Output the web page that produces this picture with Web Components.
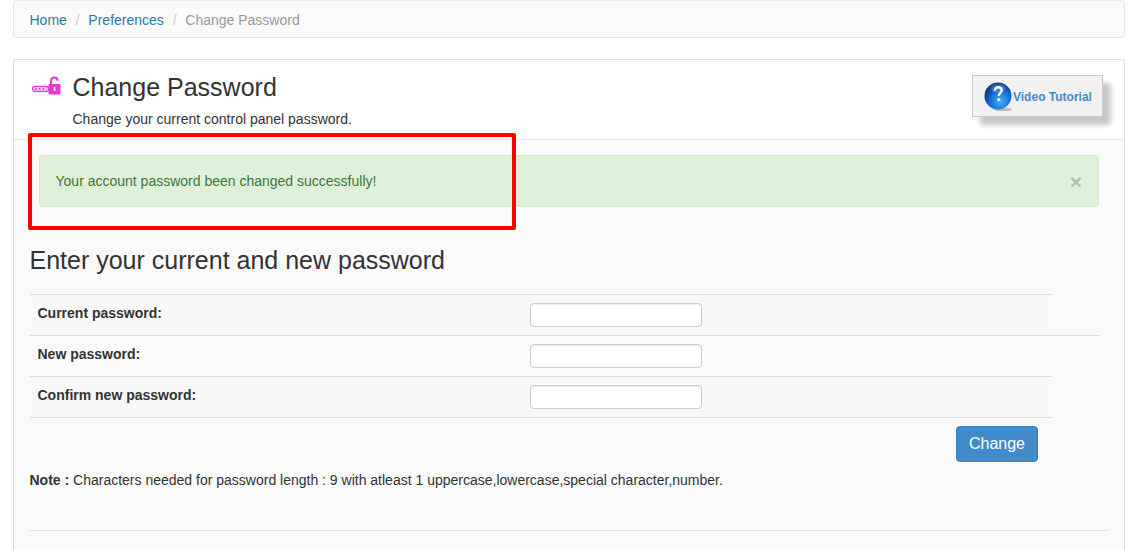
<!DOCTYPE html>
<html>
<head>
<meta charset="utf-8">
<title>Change Password</title>
<style>
    html, body { margin: 0; background: #fff; }
    body { font: 14px/20px "Liberation Sans", Arial, sans-serif; color: #333; height: 550px; overflow: hidden; }
</style>
</head>
<body>
<cp-page>
    <cp-breadcrumb slot="crumbs" items="Home,Preferences" current="Change Password"></cp-breadcrumb>
    <cp-panel slot="panel">
        <cp-header slot="head" heading="Change Password" sub="Change your current control panel password."></cp-header>
        <cp-alert>Your account password been changed successfully!</cp-alert>
        <cp-form></cp-form>
    </cp-panel>
</cp-page>

<script>
class CpPage extends HTMLElement {
    constructor() {
        super();
        this.attachShadow({mode: "open"}).innerHTML = `
        <style>
            :host { display: block; padding: 0 14px 0 13px; position: relative; }
            .gap { height: 21px; }
            .mark { position: absolute; left: 28px; top: 133px; width: 480px; height: 89px; border: 4px solid #f00; border-radius: 2px; }
        </style>
        <slot name="crumbs"></slot>
        <div class="gap"></div>
        <slot name="panel"></slot>
        <div class="mark"></div>
        `;
    }
}

class CpBreadcrumb extends HTMLElement {
    constructor() {
        super();
        this._shadowDOM = this.attachShadow({mode: "open"});
    }

    connectedCallback() {
        const links = this.getAttribute("items").split(",");
        this._shadowDOM.innerHTML = `
        <style>
            :host { display: flex; height: 38px; box-sizing: border-box; align-items: center; padding: 1px 15px 0 15.5px;
                background: #fafafa; border: 1px solid #e5e5e5; border-top-color: #eee; border-radius: 4px; }
            a { color: #2e7ba6; text-decoration: none; }
            i { font-style: normal; color: #ccc; padding: 0 8.8px; }
            span { color: #999; }
        </style>
        ${links.map(l => `<a href="#">${l}</a><i>/</i>`).join("")}<span>${this.getAttribute("current")}</span>
        `;
    }
}

class CpPanel extends HTMLElement {
    constructor() {
        super();
        this.attachShadow({mode: "open"}).innerHTML = `
        <style>
            :host { display: block; border: 1px solid #ddd; border-bottom: 0; border-radius: 4px 4px 0 0; background: #fafafa; height: 491px; box-sizing: border-box; }
            .body { padding: 15px 25px 0 25px; }
        </style>
        <slot name="head"></slot>
        <div class="body"><slot></slot></div>
        `;
    }
}

class CpHeader extends HTMLElement {
    constructor() {
        super();
        this._shadowDOM = this.attachShadow({mode: "open"});
    }

    connectedCallback() {
        this._shadowDOM.innerHTML = `
        <style>
            :host { display: flex; height: 80px; box-sizing: border-box; background: #fff; border-bottom: 1px solid #e5e5e5;
                border-radius: 4px 4px 0 0; padding: 14px 21px 0 17px; }
            svg { flex: none; margin: 2px 10.5px 0 0; }
            .text { flex: 1; }
            h1 { margin: 0; font-size: 25px; font-weight: 400; line-height: 27px; color: #333; }
            p { margin: 8px 0 0; color: #333; }
            cp-video { margin-top: 1px; }
        </style>
        <svg width="31" height="20" viewBox="0 0 31 20">
            <rect x="1.6" y="10.4" width="16" height="5" rx="2.5" fill="#f8d4f3" stroke="#e63bd3" stroke-width="1.3"/>
            <circle cx="5" cy="12.9" r="1" fill="#e63bd3"/>
            <circle cx="8.7" cy="12.9" r="1" fill="#e63bd3"/>
            <circle cx="12.4" cy="12.9" r="1" fill="#e63bd3"/>
            <path d="M20 8V5C20 2.8 21.3 1.5 23.2 1.5S26.6 2.8 26.6 4.8" fill="none" stroke="#e63bd3" stroke-width="2"/>
            <rect x="17.5" y="8" width="12" height="10.5" rx="1.2" fill="#e63bd3"/>
            <rect x="22.8" y="11" width="1.6" height="4" fill="#fff"/>
        </svg>
        <div class="text"><h1>${this.getAttribute("heading")}</h1><p>${this.getAttribute("sub")}</p></div>
        <cp-video>Video Tutorial</cp-video>
        `;
    }
}

class CpVideo extends HTMLElement {
    constructor() {
        super();
        this.attachShadow({mode: "open"}).innerHTML = `
        <style>
            :host { display: flex; align-items: center; width: 131px; height: 42px; box-sizing: border-box; background: #f1f1f1;
                border: 1px solid #ccc; box-shadow: 8px 8px 5px #c8c8c8; padding-left: 11px;
                font: bold 12px/14px "Liberation Sans", Arial, sans-serif; color: #428bca; }
            svg { flex: none; margin-top: 2px; }
            span { padding-top: 2px; }
        </style>
        <svg width="29" height="30" viewBox="0 0 29 30">
            <defs>
                <radialGradient id="ball" cx="0.6" cy="0.7" r="0.66">
                    <stop offset="0" stop-color="#46aef5"/>
                    <stop offset="0.55" stop-color="#1573da"/>
                    <stop offset="1" stop-color="#0a3587"/>
                </radialGradient>
            </defs>
            <ellipse cx="19" cy="27.5" rx="9" ry="1.6" fill="#888" opacity=".55"/>
            <circle cx="14" cy="14" r="13.5" fill="url(#ball)"/>
            <ellipse cx="14" cy="6" rx="8" ry="4.5" fill="#fff" opacity=".16"/>
            <path d="M10.8 8.6C11 6.2 12.5 5.2 14.3 5.2C16.4 5.2 17.7 6.5 17.7 8.2C17.7 10.6 14.8 11 14.8 14" fill="none" stroke="#fff" stroke-width="2.4"/>
            <circle cx="14.8" cy="17.6" r="1.6" fill="#fff"/>
        </svg>
        <span><slot></slot></span>
        `;
    }
}

class CpAlert extends HTMLElement {
    constructor() {
        super();
        this.attachShadow({mode: "open"}).innerHTML = `
        <style>
            :host { display: flex; align-items: center; justify-content: space-between; height: 52px; box-sizing: border-box;
                padding: 0 16px 0 15.5px; background: #dff0d8; border: 1px solid #d6e9c6; border-radius: 4px; color: #3c763d; }
            b { font-size: 21px; line-height: 21px; color: #000; opacity: .2; }
        </style>
        <span><slot></slot></span><b>×</b>
        `;
    }
}

class CpRow extends HTMLElement {
    constructor() {
        super();
        this._shadowDOM = this.attachShadow({mode: "open"});
    }

    connectedCallback() {
        this._shadowDOM.innerHTML = `
        <style>
            :host { display: grid; grid-template-columns: 492.5px 1fr; border-top: 1px solid #ddd; }
            :host([striped]) { background: #f9f9f9; }
            :host([wide]) { margin-right: -47px; padding-right: 47px; }
            label { padding: 8px; font-weight: 700; }
            div { padding: 8px; height: 24px; }
            input { display: block; box-sizing: border-box; width: 172px; height: 24px; margin: 0; padding: 0 6px; background: #fff;
                border: 1px solid #ccc; border-radius: 4px; box-shadow: inset 0 1px 1px rgba(0,0,0,.075); }
        </style>
        <label>${this.getAttribute("label")}</label><div><input type="password"></div>
        `;
    }
}

class CpForm extends HTMLElement {
    constructor() {
        super();
        this.attachShadow({mode: "open"}).innerHTML = `
        <style>
            :host { display: block; margin-left: -9.5px; }
            h3 { margin: 0; padding-top: 40px; font-size: 25px; font-weight: 400; line-height: 27px; color: #333; }
            .table { width: 1022.5px; margin-top: 20px; border-bottom: 1px solid #ddd; }
            .actions { width: 1008.5px; display: flex; justify-content: flex-end; padding-top: 8px; }
            button { width: 82px; height: 36px; box-sizing: border-box; padding: 0; font: 16px "Liberation Sans", Arial, sans-serif; color: #fff;
                background: #428bca; border: 1px solid #357ebd; border-radius: 4px; }
            p { margin: 8px 0 0; }
            hr { width: 1079px; margin: 40px 0 0 -1px; border: 0; border-top: 1px solid #e5e5e5; }
        </style>
        <h3>Enter your current and new password</h3>
        <div class="table">
            <cp-row striped label="Current password:"></cp-row>
            <cp-row wide label="New password:"></cp-row>
            <cp-row striped label="Confirm new password:"></cp-row>
        </div>
        <div class="actions"><button>Change</button></div>
        <p><b>Note :</b> Characters needed for password length : 9 with atleast 1 uppercase,lowercase,special character,number.</p>
        <hr>
        `;
    }
}

customElements.define("cp-page", CpPage);
customElements.define("cp-breadcrumb", CpBreadcrumb);
customElements.define("cp-panel", CpPanel);
customElements.define("cp-header", CpHeader);
customElements.define("cp-video", CpVideo);
customElements.define("cp-alert", CpAlert);
customElements.define("cp-row", CpRow);
customElements.define("cp-form", CpForm);
</script>
</body>
</html>
